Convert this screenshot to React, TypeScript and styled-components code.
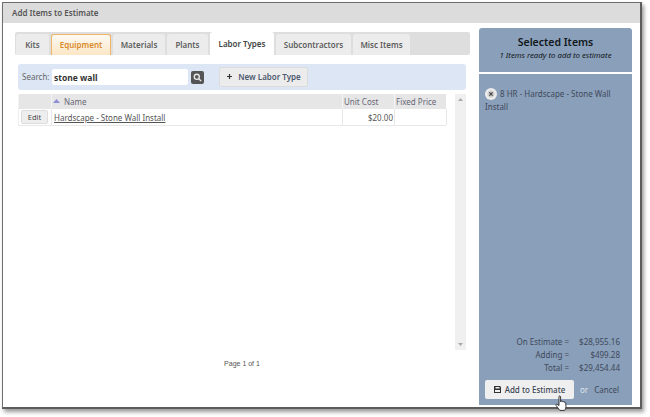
import React from "react";
import styled, {createGlobalStyle} from "styled-components";

const Global = createGlobalStyle`
  html, body {
    margin: 0;
    padding: 0;
    background: #fff;
  }
  body {
    width: 650px;
    height: 417px;
    overflow: hidden;
    font-family: "Noto Sans", "DejaVu Sans", Verdana, sans-serif;
    font-size: 8px;
    color: #555;
  }
`;

const Screen = styled.div`
  width: 650px;
  height: 417px;
  padding: 2px 8px 8px 2px;
  box-sizing: border-box;
`;

const Dialog = styled.div`
  height: 100%;
  display: flex;
  flex-direction: column;
  box-sizing: border-box;
  background: #fff;
  border: 1px solid #6e6e6e;
  border-right: 2px solid #5c5c5c;
  border-bottom: 2px solid #5c5c5c;
  box-shadow: 2px 3px 4px rgba(0, 0, 0, 0.4);
`;

const TitleBar = styled.div`
  height: 20px;
  flex: none;
  display: flex;
  align-items: center;
  box-sizing: border-box;
  padding: 0 0 2px 9px;
  background: #dcdcdc;
  color: #555;
  font-weight: 600;
`;

const Content = styled.div`
  flex: 1;
  min-height: 0;
  display: flex;
  padding: 5px 7px 2px 12px;
  gap: 9px;
`;

const Main = styled.div`
  width: 455px;
  padding-top: 4px;
  display: flex;
  flex-direction: column;
`;

const TabBar = styled.div`
  height: 23px;
  flex: none;
  display: flex;
  align-items: flex-end;
  box-sizing: border-box;
  padding-left: 1px;
  background: #dedede;
  border-radius: 2px;
`;

const Tab = styled.div<{$state?: "active" | "hover"; $width: number; $gap: number}>`
  width: ${p => p.$width}px;
  margin-right: ${p => p.$gap}px;
  height: ${p => (p.$state === "active" ? 23 : 21)}px;
  display: flex;
  align-items: center;
  justify-content: center;
  box-sizing: border-box;
  padding-bottom: 1px;
  border-radius: 3px 3px 0 0;
  font-weight: 600;
  color: ${p => (p.$state === "hover" ? "#d98a2b" : p.$state === "active" ? "#444" : "#5e5e5e")};
  background: ${p =>
    p.$state === "active" ? "#fff" : p.$state === "hover" ? "linear-gradient(#fdfaf3, #fbe6c6)" : "#ececec"};
  border: ${p => (p.$state === "hover" ? "1px solid #eeb468" : "none")};
  border-bottom: none;
`;

const SearchBar = styled.div`
  width: 448px;
  height: 26px;
  margin: 9px 0 0 3px;
  flex: none;
  display: flex;
  align-items: center;
  box-sizing: border-box;
  padding-left: 4px;
  background: #dce6f5;
  border-radius: 3px;
`;

const SearchLabel = styled.span`
  color: #666;
  width: 30px;
  flex: none;
  padding-bottom: 1px;
`;

const SearchInput = styled.div`
  width: 136px;
  height: 16px;
  display: flex;
  align-items: center;
  box-sizing: border-box;
  padding-left: 2px;
  background: #fff;
  border-radius: 2px;
  font-weight: 700;
  font-size: 8.5px;
  color: #333;
`;

const SearchButton = styled.div`
  width: 13px;
  height: 13px;
  margin-left: 3px;
  display: flex;
  align-items: center;
  justify-content: center;
  background: #555;
  border-radius: 2px;
`;

const NewButton = styled.div`
  width: 89px;
  height: 20px;
  margin-left: 15px;
  display: flex;
  align-items: center;
  justify-content: center;
  gap: 5px;
  box-sizing: border-box;
  padding-bottom: 1px;
  background: #ececec;
  border: 1px solid #dcdcdc;
  border-radius: 2px;
  color: #4d5a70;
  font-weight: 600;
`;

const ListArea = styled.div`
  flex: 1;
  min-height: 0;
  margin: 4px 0 0 3px;
  display: flex;
  gap: 9px;
`;

const TableColumn = styled.div`
  width: 428px;
  display: flex;
  flex-direction: column;
`;

const HeadRow = styled.div`
  height: 15px;
  display: grid;
  grid-template-columns: 33px 291px 52px 52px;
  background: #e6e6e6;
`;

const HeadCell = styled.div`
  display: flex;
  align-items: center;
  gap: 4px;
  padding: 0 0 1px 1px;
  color: #667;
  border-left: 1px solid #f4f4f4;
`;

const BodyRow = styled.div`
  height: 17px;
  display: grid;
  grid-template-columns: 33px 291px 52px 52px;
  box-sizing: border-box;
  border-bottom: 1px solid #e8e8e8;
  border-left: 1px solid #eee;
`;

const BodyCell = styled.div<{$right?: boolean}>`
  display: flex;
  align-items: center;
  justify-content: ${p => (p.$right ? "flex-end" : "flex-start")};
  padding: 0 1px 0 2px;
  border-right: 1px solid #e8e8e8;
`;

const EditButton = styled.div`
  width: 27px;
  height: 14px;
  display: flex;
  align-items: center;
  justify-content: center;
  box-sizing: border-box;
  background: #eee;
  border: 1px solid #ddd;
  border-radius: 2px;
  font-size: 7.5px;
  color: #444;
`;

const ItemLink = styled.a`
  color: #555;
  text-decoration: underline;
`;

const Pager = styled.div`
  margin-top: 234px;
  padding-left: 20px;
  text-align: center;
  font-family: "Liberation Sans", Arial, sans-serif;
  font-size: 7px;
  color: #555;
`;

const ScrollTrack = styled.div`
  width: 11px;
  height: 256px;
  display: flex;
  flex-direction: column;
  justify-content: space-between;
  align-items: center;
  padding: 4px 0;
  box-sizing: border-box;
  background: #f0f0f0;
`;

const Side = styled.aside`
  width: 153px;
  display: flex;
  flex-direction: column;
  gap: 2px;
  position: relative;
`;

const SideHead = styled.div`
  height: 44px;
  flex: none;
  box-sizing: border-box;
  padding-top: 7px;
  text-align: center;
  background: #8a9fb9;
  border-radius: 3px 3px 0 0;
  color: #111820;
`;

const SideTitle = styled.div`
  font-size: 10.5px;
  font-weight: 600;
  line-height: 14px;
`;

const SideNote = styled.div`
  margin-top: 1px;
  font-size: 7.8px;
  font-style: italic;
  line-height: 10px;
`;

const SideBody = styled.div`
  flex: 1;
  display: flex;
  flex-direction: column;
  box-sizing: border-box;
  padding: 13px 6px 6px 6px;
  background: #8a9fb9;
  color: #3e4a5c;
`;

const Selected = styled.div`
  flex: 1;
  line-height: 13px;
`;

const RemoveBadge = styled.svg`
  width: 12px;
  height: 12px;
  margin-right: 3px;
  vertical-align: -3px;
`;

const Totals = styled.div`
  display: grid;
  grid-template-columns: 84px 51px;
  line-height: 13px;
  color: #3e4a5c;
`;

const TotalLabel = styled.div`
  text-align: right;
`;

const TotalValue = styled.div`
  text-align: right;
`;

const Actions = styled.div`
  margin-top: 6px;
  display: flex;
  align-items: center;
`;

const AddButton = styled.div`
  width: 89px;
  height: 19px;
  display: flex;
  align-items: center;
  justify-content: center;
  gap: 4px;
  background: #efefef;
  border-radius: 2px;
  color: #3c4654;
  font-weight: 500;
`;

const OrText = styled.span`
  margin-left: 6px;
  color: #dfe6ee;
`;

const CancelLink = styled.span`
  margin-left: 6px;
  color: #3e4a5c;
`;

const Pointer = styled.svg`
  position: absolute;
  left: 76px;
  bottom: -7px;
`;

const tabs = [
  {label: "Kits", width: 33, gap: 2},
  {label: "Equipment", width: 60, gap: 2, state: "hover" as const},
  {label: "Materials", width: 52, gap: 2},
  {label: "Plants", width: 41, gap: 2},
  {label: "Labor Types", width: 64, gap: 2, state: "active" as const},
  {label: "Subcontractors", width: 75, gap: 2},
  {label: "Misc Items", width: 57, gap: 0},
];

const totals = [
  ["On Estimate =", "$28,955.16"],
  ["Adding =", "$499.28"],
  ["Total =", "$29,454.44"],
];

function App() {
  return (
    <Screen>
      <Global/>
      <Dialog>
        <TitleBar>Add Items to Estimate</TitleBar>
        <Content>
          <Main>
            <TabBar>
              {tabs.map(t =>
                <Tab key={t.label} $state={t.state} $width={t.width} $gap={t.gap}>{t.label}</Tab>
              )}
            </TabBar>
            <SearchBar>
              <SearchLabel>Search:</SearchLabel>
              <SearchInput>stone wall</SearchInput>
              <SearchButton>
                <svg width="9" height="9" viewBox="0 0 10 10" fill="none" stroke="#e8e8e8" strokeWidth="1.5">
                  <circle cx="4.2" cy="4.2" r="2.8"/>
                  <path d="M6.4 6.4 9 9"/>
                </svg>
              </SearchButton>
              <NewButton>
                <svg width="7" height="7" viewBox="0 0 7 7" stroke="#333" strokeWidth="1.2">
                  <path d="M3.5 1v5M1 3.5h5"/>
                </svg>
                New Labor Type
              </NewButton>
            </SearchBar>
            <ListArea>
              <TableColumn>
                <HeadRow>
                  <HeadCell/>
                  <HeadCell>
                    <svg width="7" height="4" viewBox="0 0 7 4">
                      <path d="M3.5 0 7 4H0z" fill="#8f8fd8"/>
                    </svg>
                    Name
                  </HeadCell>
                  <HeadCell>Unit Cost</HeadCell>
                  <HeadCell>Fixed Price</HeadCell>
                </HeadRow>
                <BodyRow>
                  <BodyCell><EditButton>Edit</EditButton></BodyCell>
                  <BodyCell><ItemLink>Hardscape - Stone Wall Install</ItemLink></BodyCell>
                  <BodyCell $right>$20.00</BodyCell>
                  <BodyCell/>
                </BodyRow>
                <Pager>Page 1 of 1</Pager>
              </TableColumn>
              <ScrollTrack>
                <svg width="5" height="3" viewBox="0 0 5 3"><path d="M2.5 0 5 3H0z" fill="#aaa"/></svg>
                <svg width="5" height="3" viewBox="0 0 5 3"><path d="M0 0h5L2.5 3z" fill="#aaa"/></svg>
              </ScrollTrack>
            </ListArea>
          </Main>
          <Side>
            <SideHead>
              <SideTitle>Selected Items</SideTitle>
              <SideNote>1 Items ready to add to estimate</SideNote>
            </SideHead>
            <SideBody>
              <Selected>
                <RemoveBadge viewBox="0 0 12 12">
                  <circle cx="6" cy="6" r="6" fill="#ececec"/>
                  <circle cx="6" cy="6" r="3.500" fill="#cfcfcf"/>
                  <path d="M4.400 4.400l3.200 3.200M7.600 4.400l-3.200 3.200" stroke="#444" strokeWidth="1.200"/>
                </RemoveBadge>
                8 HR - Hardscape - Stone Wall Install
              </Selected>
              <Totals>
                {totals.map(([label, value]) =>
                  <React.Fragment key={label}>
                    <TotalLabel>{label}</TotalLabel>
                    <TotalValue>{value}</TotalValue>
                  </React.Fragment>
                )}
              </Totals>
              <Actions>
                <AddButton>
                  <svg width="7" height="7" viewBox="0 0 7 7">
                    <path d="M0 0h6l1 1v6H0zM1.500 1v1.500h4V1zM1 4v2h5V4z" fill="#333" fillRule="evenodd"/>
                  </svg>
                  Add to Estimate
                </AddButton>
                <OrText>or</OrText>
                <CancelLink>Cancel</CancelLink>
              </Actions>
            </SideBody>
            <Pointer width="14" height="17" viewBox="0 0 14 17">
              <path
                d="M4 1.200c.7-.6 1.600-.2 1.600.7v5l.4-.8c.7-.3 1.400 0 1.500.6.7-.4 1.400-.1 1.600.6.8-.3 1.600.1 1.600.9l.3 3.600c0 1.600-.7 2.600-1.400 3.600H4.800L1 10.400c-.4-.7.3-1.500 1.100-1.100L4 10.500z"
                fill="#fff"
                stroke="#222"
                strokeWidth="0.9"
              />
            </Pointer>
          </Side>
        </Content>
      </Dialog>
    </Screen>
  );
}

export default App;
